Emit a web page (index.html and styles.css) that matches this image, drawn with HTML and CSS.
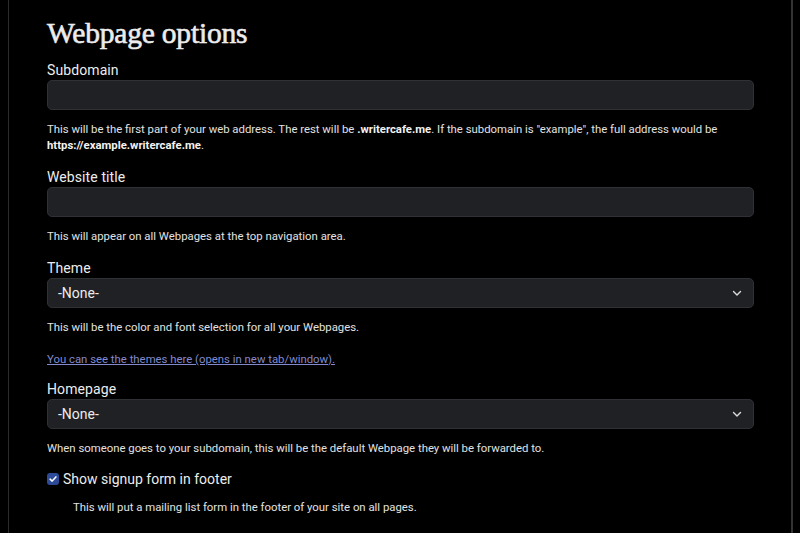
FILE: index.html
```html
<!DOCTYPE html>
<html lang="en">
<head>
<meta charset="utf-8">
<title>Webpage options</title>
<link rel="stylesheet" href="styles.css">
</head>
<body>
<main class="panel">
  <h1 class="title">Webpage options</h1>

  <div class="field">
    <label class="label" for="sub">Subdomain</label>
    <input class="input" id="sub" type="text">
    <p class="help">This will be the first part of your web address. The rest will be <b>.writercafe.me</b>. If the subdomain is "example", the full address would be <b>https://example.writercafe.me</b>.</p>
  </div>

  <div class="field">
    <label class="label" for="wt">Website title</label>
    <input class="input" id="wt" type="text">
    <p class="help">This will appear on all Webpages at the top navigation area.</p>
  </div>

  <div class="field">
    <label class="label">Theme</label>
    <div class="select"><span>-None-</span><svg class="chev" viewBox="0 0 12 12" width="12" height="12"><path d="M2.5 4.5 6 8l3.5-3.5" fill="none" stroke="currentColor" stroke-width="1.4" stroke-linecap="round" stroke-linejoin="round"/></svg></div>
    <p class="help">This will be the color and font selection for all your Webpages.</p>
    <p class="help link-row"><a class="link" href="#">You can see the themes here (opens in new tab/window).</a></p>
  </div>

  <div class="field">
    <label class="label">Homepage</label>
    <div class="select"><span>-None-</span><svg class="chev" viewBox="0 0 12 12" width="12" height="12"><path d="M2.5 4.5 6 8l3.5-3.5" fill="none" stroke="currentColor" stroke-width="1.4" stroke-linecap="round" stroke-linejoin="round"/></svg></div>
    <p class="help">When someone goes to your subdomain, this will be the default Webpage they will be forwarded to.</p>
  </div>

  <div class="check-row">
    <span class="checkbox"><svg viewBox="0 0 12 12" width="10" height="10"><path d="M2.5 6.2 5 8.5l4.5-5" fill="none" stroke="#fff" stroke-width="1.8" stroke-linecap="round" stroke-linejoin="round"/></svg></span>
    <span class="check-label">Show signup form in footer</span>
  </div>
  <p class="help indent">This will put a mailing list form in the footer of your site on all pages.</p>

  <div class="field">
    <label class="label">Footer text</label>
  </div>
</main>
</body>
</html>
```

FILE: styles.css
```css
html, body {
  margin: 0;
  padding: 0;
  background: #000;
  height: 100%;
  overflow: hidden;
}
body {
  padding: 0 7px 0 8px;
  font-family: "Roboto", "Liberation Sans", sans-serif;
  color: #e6e6e6;
}
.panel {
  border-left: 1px solid #2a2a2a;
  border-right: 2px solid #333;
  min-height: 100%;
  box-sizing: border-box;
  padding: 15px 37px 0 38px;
}
.title {
  font-family: "Liberation Serif", "DejaVu Serif", serif;
  font-weight: 400;
  -webkit-text-stroke: 0.6px #ececec;
  font-size: 29.5px;
  line-height: 36px;
  margin: 0 0 9px;
  color: #ececec;
  letter-spacing: -0.2px;
}
.field {
  display: flex;
  flex-direction: column;
}
.label {
  font-size: 14px;
  line-height: 20px;
  color: #ededed;
  letter-spacing: 0.1px;
}
.input {
  height: 30px;
  box-sizing: border-box;
  background: #202124;
  border: 1px solid #303134;
  border-radius: 5px;
  margin: 0;
  color: #eee;
}
.select {
  height: 30px;
  box-sizing: border-box;
  background: #202124;
  border: 1px solid #303134;
  border-radius: 5px;
  display: flex;
  align-items: center;
  justify-content: space-between;
  padding: 0 10px 0 10px;
  font-size: 14px;
  color: #ececec;
}
.chev { color: #ddd; }
.help {
  font-size: 11.35px;
  line-height: 16px;
  margin: 11px 0 14px;
  color: #e2e2e2;
}
.help b { font-weight: 700; color: #f2f2f2; }
.link-row { margin-top: 2px; margin-bottom: 12px; }
.link {
  color: #8389cc;
  text-decoration: underline;
}
.check-row {
  display: flex;
  align-items: center;
  gap: 4px;
  margin-top: -1px;
}
.checkbox {
  width: 12px;
  height: 12px;
  border-radius: 3px;
  background: #2d4a98;
  display: flex;
  align-items: center;
  justify-content: center;
}
.check-label {
  font-size: 14px;
  line-height: 20px;
  color: #ececec;
}
.indent { margin-left: 26px; margin-top: 10px; }
```
